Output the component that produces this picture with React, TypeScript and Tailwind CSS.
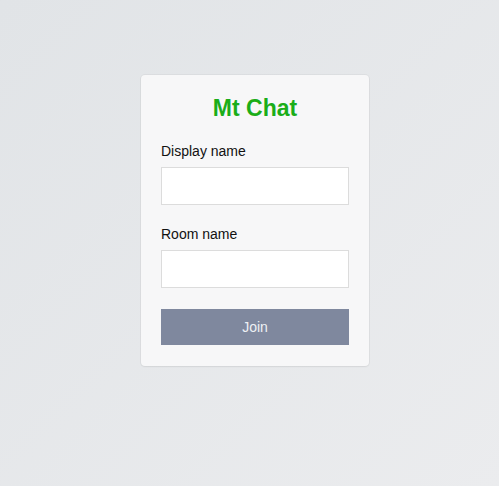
export default function App() {
  return (
    <div
      className="flex min-h-[486px] justify-center bg-gradient-to-br from-[#e1e4e7] to-[#ebecee] pl-[11px] pt-[75px]"
      style={{ fontFamily: '"Liberation Sans", Arial, sans-serif' }}
    >
      <div className="flex h-fit w-[228px] flex-col gap-5 rounded-[4px] bg-[#f7f7f8] px-5 pb-[21px] pt-[19px] shadow-[0_0_0_1px_rgba(0,0,0,0.035),0_1px_2px_rgba(0,0,0,0.05)]">
        <h1 className="text-center text-[23px] font-bold leading-[28px] text-[#1aad19]">
          Mt Chat
        </h1>

        <div className="mt-px flex flex-col gap-[21px]">
          <label className="flex flex-col">
            <span className="mb-2 text-[14px] leading-4 text-[#111]">Display name</span>
            <input className="h-[38px] w-full border border-[#dcdcdc] bg-white px-2 text-sm outline-none" />
          </label>

          <label className="flex flex-col">
            <span className="mb-2 text-[14px] leading-4 text-[#111]">Room name</span>
            <input className="h-[38px] w-full border border-[#dcdcdc] bg-white px-2 text-sm outline-none" />
          </label>

          <button className="h-9 w-full bg-[#7f889e] text-[14px] text-[#eef0f4]">
            Join
          </button>
        </div>
      </div>
    </div>
  );
}
